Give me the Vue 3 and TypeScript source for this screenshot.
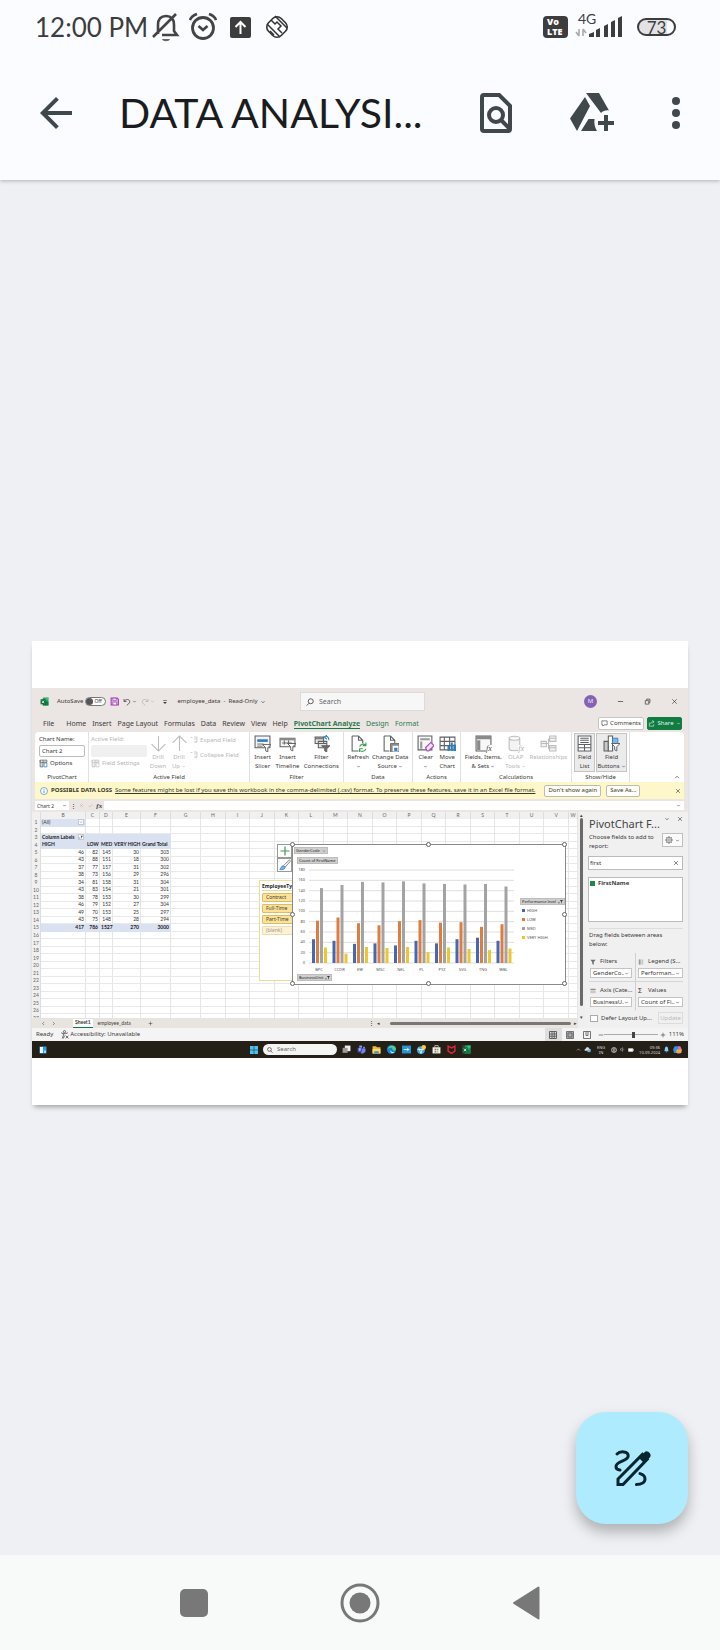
<script setup lang="ts">
import { h, ref } from 'vue'

type Stroke = [d: string, stroke?: string, fill?: string, width?: number]

const G = '#5f6062'
const L = '#bdbdbd'
const B = '#2f7fc4'

// Small outline drawings on a 16 x 16 grid
const glyphs: Record<string, Stroke[]> = {
  chevron: [['M4 6l4 4 4-4', 'currentColor', 'none', 1.8]],
  up: [['M3 11l5-5 5 5', 'currentColor', 'none', 1.8]],
  left: [['M10 3L5 8l5 5', 'currentColor', 'none', 1.6]],
  right: [['M6 3l5 5-5 5', 'currentColor', 'none', 1.6]],
  close: [['M3 3l10 10M13 3L3 13', 'currentColor', 'none', 1.6]],
  check: [['M2 9l4 4 8-9', 'currentColor', 'none', 1.8]],
  plus: [['M8 2v12M2 8h12', 'currentColor', 'none', 1.6]],
  minus: [['M2 8h12', 'currentColor', 'none', 1.6]],
  restore: [['M3 6h8v8H3zM6 5V2.500h7.500v8H11', 'currentColor', 'none', 1.6]],
  lens: [['M9.500 1.500a5 5 0 1 1 0 10a5 5 0 1 1 0-10M6 10.500L1.500 15', 'currentColor', 'none', 1.6]],
  lensright: [['M6.500 1.500a5 5 0 1 1 0 10a5 5 0 1 1 0-10M10 10.500L14.500 15', 'currentColor', 'none', 2]],
  excel: [['M5 1h10v14H5z', '', '#21a366'], ['M10 8h5v7H5v-3z', '', '#107c41'], ['M10 1h5v4h-5z', '', '#33c481'], ['M1 4h9v9H1z', '', '#0b6b38'], ['M3.500 6.500l4 4.500M7.500 6.500l-4 4.500', '#fff', 'none', 1.4]],
  save: [['M2 2h11l2 2v10H2z', '#a24ab5', '#dcb2e6', 2], ['M5 2h6v4H5zM5 9h7v5H5z', '#a24ab5', '#fff', 1.4]],
  undo: [['M2 2v5h5M2.500 6.500c3-5 11-4.500 11 1 0 3-3 4.500-6 7', 'currentColor', 'none', 1.5]],
  redo: [['M14 2v5H9M13.500 6.500c-3-5-11-4.500-11 1 0 3 3 4.500 6 7', 'currentColor', 'none', 1.5]],
  custom: [['M3 4h10', 'currentColor', 'none', 1.6], ['M3 8h10l-5 5z', '', 'currentColor']],
  bubble: [['M2 2h12v9H7l-3 3v-3H2z', 'currentColor', 'none', 1.4]],
  share: [['M3 6v8h10v-4M6 9c0-4 3-5 7-5M10 1l4 3-4 3', 'currentColor', 'none', 1.4]],
  options: [['M2 2h12v4H2zM2 2v12h5V2', G, '#d8d8d8', 1.3], ['M9 7h5v7H9z', B, '#fff', 1.3]],
  optionsoff: [['M2 2h12v4H2zM2 2v12h5V2', L, '#efefef', 1.3], ['M9 7h5v7H9z', L, '#fff', 1.3]],
  down: [['M8 1v14M1.500 8.500L8 15l6.500-6.500', L, 'none', 1]],
  rise: [['M8 15V1M1.500 7.500L8 1l6.500 6.500', L, 'none', 1]],
  expand: [['M1 3h4M8 2h6v4H8M8 12h6V6M10 12h4', L, 'none', 1.4]],
  slicer: [['M1 1h14v11H1z', G, '#f4f4f4', 1], ['M3 4h10v2.500H3z', '', B], ['M3 8.500h6M3 10.500h5', G, 'none', 0.8], ['M8 9h8l-3 3v4l-2-1v-3z', G, '#fff', 0.9]],
  timeline: [['M1 3h14v8H1z', G, '#f4f4f4', 1], ['M1 3h14v2H1z', '', '#8a8a8a'], ['M3 7.500h9M5 5v4M9 5v4', G, 'none', 0.9], ['M8 8h8l-3 3v4l-2-1v-3z', G, '#fff', 0.9]],
  connect: [['M2 2h8v6H2zM5 6h8v6H5z', G, '#e4e4e4', 1], ['M2 3.500h8M5 8h8', G, 'none', 1], ['M10 2c3-2 5 0 5 3M13 0l-2 2 2 2', B, 'none', 1], ['M8 10h8l-3 3v3l-2-1v-2z', G, '#6b6b6b', 0.8]],
  refresh: [['M2 1h6l4 4v3M2 1v14h6M8 1v4h4', G, 'none', 1], ['M9 11c1-3 5-3 6-1M15 7v3h-3M15 13c-1 3-5 3-6 1M9 16v-3h3', '#3a9d53', 'none', 1]],
  source: [['M2 1h6l4 4v3M2 1v14h5M8 1v4h4', G, 'none', 1], ['M8 8h8v8H8z', G, '#fff', 0.9], ['M8 8h8v2H8zM8 8h2v8H8z', '', '#8a8a8a'], ['M11.500 12h3v3h-3z', '', B]],
  clear: [['M1 1h13v13H1z', G, '#f8f8f8', 1], ['M3 3h9v2H3zM3 6h2v7H3z', '', '#9a9a9a'], ['M8 12l5-5 3 3-5 5H9.500z', '#a24ab5', '#f2dcf7', 1]],
  move: [['M1 2h14v12H1zM1 6h14M1 10h14M5 2v12M10 2v12', G, 'none', 1], ['M8 10h2v5H8zM11 7h2v8h-2zM13.500 9h2.500v6h-2.500z', '', B]],
  fields: [['M1 1h14v14H1z', G, '#f8f8f8', 1], ['M1 1h14v3H1zM2 5h3v9H2z', '', '#8a8a8a']],
  olap: [['M2 3c0-2.500 10-2.500 10 0v10c0 2.500-10 2.500-10 0zM2 3c0 2.500 10 2.500 10 0', L, '#f3f3f3', 1]],
  relation: [['M1 6h5v5H1zM9 1h6v5H9zM9 10h6v5H9z', L, '#f3f3f3', 1], ['M6 8h2V4h1M8 8v5h1M9 3h6M9 12h6M1 8h5', L, 'none', 1]],
  list: [['M2 1h12v14H2z', G, '#fff', 1], ['M4 3h8M4 5h8M4 7h8M2 9h12M8 9v6M2 12h12', G, 'none', 1]],
  buttons: [['M1 6h4v9H1z', G, '#c9c9c9', 1], ['M5 1h4v14H5z', G, '#fff', 1], ['M9 3h5v5H9z', B, '#7db7e8', 0.8], ['M8 8h8l-3 3v4l-2-1v-3z', G, '#fff', 0.9]],
  info: [['M8 1a7 7 0 1 1 0 14a7 7 0 1 1 0-14', B, '#fff', 1.3], ['M8 7v5M8 4v1.500', B, 'none', 1.6]],
  gear: [['M8 5.500a2.500 2.500 0 1 1 0 5a2.500 2.500 0 1 1 0-5', G, 'none', 1.3], ['M8 2.500a5.500 5.500 0 1 1 0 11a5.500 5.500 0 1 1 0-11', G, 'none', 1.3], ['M8 0v3M8 13v3M0 8h3M13 8h3M2.500 2.500l2 2M11.500 11.500l2 2M13.500 2.500l-2 2M4.500 11.500l-2 2', G, 'none', 1.5]],
  funnel: [['M1 2h14l-5 6v7l-4-2V8z', '', '#6c6c6c']],
  sortfunnel: [['M1 12h4M3 9v5', '#333', 'none', 1.4], ['M6 3h10l-4 5v6l-2-1V8z', '', '#333']],
  bars: [['M2 1h5v14H2z', '', '#9a9a9a'], ['M9 1h5v14H9z', '', '#c8c8c8']],
  rows: [['M1 2h14v4H1z', '', '#8e8e8e'], ['M1 8h14v6H1z', '', '#c8c8c8']],
  brush: [['M14 1L6 9l2 2 7-8z', G, '#fff', 1], ['M6 9c-3 0-3 3-5 5 3 1 7 0 7-3z', B, '#6fb1e6', 1]],
  access: [['M8 1a2 2 0 1 1 0 4a2 2 0 1 1 0-4M2 5l4 1.500v3L4 15M14 5l-4 1.500M6 6.500h4M8 10l-2 5', 'currentColor', 'none', 1.3], ['M10 10l5 5M15 10l-5 5', 'currentColor', 'none', 1.3]],
  grid: [['M1 1h14v14H1zM1 6h14M1 10.500h14M6 1v14M10.500 1v14', 'currentColor', 'none', 1.8]],
  layout: [['M1 1h14v14H1zM4 4h8v8H4z', 'currentColor', '#aaa', 1.5]],
  breaks: [['M1 15V1h14v14zM6 1v8M10 1v8M6 9h4', 'currentColor', 'none', 1.6]],
  widgets: [['M1 1h14v14H1z', '', '#2f9be0'], ['M2 2h6v12H2z', '', '#eef7ff'], ['M10 9h4v5h-4z', '', '#9ad8ff']],
  windows: [['M0 0h7.500v7.500H0zM8.500 0H16v7.500H8.500zM0 8.500h7.500V16H0zM8.500 8.500H16V16H8.500z', '', '#4cc2f1']],
  taskview: [['M5 1h10v10H5z', '', '#f1f1f1'], ['M1 5h9v9H1z', '', '#9b9b9b']],
  teams: [['M4 1h5v4H4zM11 3h3v3h-3z', '', '#8b8ff0'], ['M6 6h9v6l-4 3H7z', '', '#7b83eb'], ['M1 5h8v8H1z', '', '#4b53bc'], ['M3 7h4M5 7v4', '#fff', 'none', 1.2]],
  folder: [['M1 2h6l2 2h6v11H1z', '', '#f0b92e'], ['M1 7h14v8H1z', '', '#ffd766'], ['M4 11h8v4H4z', '', '#3f8fd8']],
  edge: [['M8 0a8 8 0 1 1 0 16a8 8 0 1 1 0-16', '', '#1a84d0'], ['M1 8C2-1 15-1 16 7c0 4-6 3-6 1 0-5-8-3-9 0z', '', '#4ed08a'], ['M6 9c1 4 5 4 8 3-4 4-9 2-8-3z', '', '#e8f6ff']],
  arrowapp: [['M0 1h16v14H0z', '', '#2596d1'], ['M3 8h9M9 5l3 3-3 3', '#fff', 'none', 1.4]],
  globeapp: [['M7 2a7 7 0 1 1 0 14a7 7 0 1 1 0-14', '', '#3da7e0'], ['M3 5l4 10M10 5L7 15M1 8h12', '#fff', 'none', 1.3], ['M12 0a4 4 0 1 1 0 8a4 4 0 1 1 0-8', '', '#ffc83d']],
  store: [['M1 4h14v11H1z', '', '#f3f3f3'], ['M5 4V1h6v3', '#d0d0d0', 'none', 1.4], ['M4.500 6.500h3v3h-3z', '', '#e35a3a'], ['M8.500 6.500h3v3h-3z', '', '#6fb53c'], ['M4.500 10.500h3v3h-3z', '', '#3d9be0'], ['M8.500 10.500h3v3h-3z', '', '#f1b52e']],
  shield: [['M2 2l6 3 6-3v9l-6 4-6-4z', '#d8283a', 'none', 2.6]],
  cloud: [['M3 11c-3-1-2-5 1-5 1-4 7-4 8 0 4 0 4 5 1 5z', '', '#d9dde0'], ['M8 8h7v6H8z', '', '#6bb4e2']],
  net: [['M8 1a7 7 0 1 1 0 14a7 7 0 1 1 0-14M1 8h14M8 1v14M3 3.500c3 2 7 2 10 0M3 12.500c3-2 7-2 10 0', '#ddd', 'none', 1.4]],
  sound: [['M1 6h3l4-4v12l-4-4H1zM11 6c2 1 2 3 0 4', '#ddd', 'none', 1.4]],
  battery: [['M1 4h12v8H1z', '#ddd', '#fff', 1.2], ['M14 6h2v4h-2z', '', '#ddd']],
  bell: [['M3 12c2-3 0-10 5-11 5 1 3 8 5 11zM6 13h4l-2 2z', '', '#7fd0f5']],
  copilot: [['M3 2h7l2 5-3 7H2L0 8z', '', '#3a8ee6'], ['M9 2h4l3 7-3 6H7l3-7z', '', '#e86fb0'], ['M6 8h9v6H6z', '', '#f3b13c']],
}

const Glyph = (p: { name: string }) =>
  h('svg', { viewBox: '0 0 16 16', 'aria-hidden': 'true' },
    glyphs[p.name].map(([d, stroke, fill, width]) =>
      h('path', { d, stroke: stroke || 'none', fill: fill ?? 'none', 'stroke-width': width ?? 1 })))
Glyph.props = ['name']

const menu = ['File', 'Home', 'Insert', 'Page Layout', 'Formulas', 'Data', 'Review', 'View', 'Help', 'PivotChart Analyze', 'Design', 'Format']

interface Tool { icon: string; lines: string[]; drop?: boolean; off?: boolean; on?: boolean; fx?: boolean }
const toolGroups: { name: string; cls: string; tools: Tool[] }[] = [
  { name: 'Filter', cls: 'g-filter', tools: [{ icon: 'slicer', lines: ['Insert', 'Slicer'] }, { icon: 'timeline', lines: ['Insert', 'Timeline'] }, { icon: 'connect', lines: ['Filter', 'Connections'] }] },
  { name: 'Data', cls: 'g-data', tools: [{ icon: 'refresh', lines: ['Refresh', ''], drop: true }, { icon: 'source', lines: ['Change Data', 'Source'], drop: true }] },
  { name: 'Actions', cls: 'g-actions', tools: [{ icon: 'clear', lines: ['Clear', ''], drop: true }, { icon: 'move', lines: ['Move', 'Chart'] }] },
  { name: 'Calculations', cls: 'g-calc', tools: [{ icon: 'fields', lines: ['Fields, Items,', '& Sets'], drop: true, fx: true }, { icon: 'olap', lines: ['OLAP', 'Tools'], drop: true, off: true, fx: true }, { icon: 'relation', lines: ['Relationships', ''], off: true }] },
  { name: 'Show/Hide', cls: 'g-show', tools: [{ icon: 'list', lines: ['Field', 'List'], on: true }, { icon: 'buttons', lines: ['Field', 'Buttons'], drop: true, on: true }] },
]

const columns = ['B', 'C', 'D', 'E', 'F', 'G', 'H', 'I', 'J', 'K', 'L', 'M', 'N', 'O', 'P', 'Q', 'R', 'S', 'T', 'U', 'V', 'W']

const units = [
  { unit: 'BPC', v: [46, 82, 145, 30], total: 303 },
  { unit: 'CCDR', v: [43, 88, 151, 18], total: 300 },
  { unit: 'EW', v: [37, 77, 157, 31], total: 302 },
  { unit: 'MSC', v: [38, 73, 156, 29], total: 296 },
  { unit: 'NEL', v: [34, 81, 158, 31], total: 304 },
  { unit: 'PL', v: [43, 83, 154, 21], total: 301 },
  { unit: 'PYZ', v: [38, 78, 153, 30], total: 299 },
  { unit: 'SVG', v: [46, 79, 152, 27], total: 304 },
  { unit: 'TNG', v: [49, 70, 153, 25], total: 297 },
  { unit: 'WBL', v: [43, 75, 148, 28], total: 294 },
]
const cells: Record<number, (string | number)[]> = {
  1: ['(All)'],
  3: ['Column Labels'],
  4: ['HIGH', 'LOW', 'MED', 'VERY HIGH', 'Grand Total'],
  15: [417, 786, 1527, 270, 3000],
}
units.forEach((u, i) => { cells[5 + i] = [...u.v, u.total] })

const series = [
  { name: 'HIGH', color: '#4668b0' },
  { name: 'LOW', color: '#dd7e40' },
  { name: 'MED', color: '#a3a3a3' },
  { name: 'VERY HIGH', color: '#eec630' },
]
const ticks = Array.from({ length: 10 }, (_, i) => i * 20)
const base = 97
const yOf = (v: number) => base - (v * 93) / 180
const xOf = (i: number) => 25 + i * 20.5

const slicer = ['Contract', 'Full-Time', 'Part-Time', '(blank)']
const areas = [
  { icon: 'funnel', title: 'Filters', value: 'GenderCo...' },
  { icon: 'bars', title: 'Legend (S...', value: 'Performan...' },
  { icon: 'rows', title: 'Axis (Cate...', value: 'BusinessU...' },
  { icon: '', title: 'Values', value: 'Count of Fi...' },
]
const taskApps = ['taskview', 'teams', 'folder', 'edge', 'arrowapp', 'globeapp', 'store', 'shield', 'excel']

const chartName = ref('Chart 2')
const query = ref('first')
const zoomLevel = ref(55)
const picked = ref(true)
const defer = ref(false)
</script>

<template>
  <div class="screen">
    <header class="top">
      <div class="status">
        <time>12:00 PM</time>
        <svg class="st" viewBox="0 0 28 30" aria-hidden="true">
          <path d="M6 22V13c0-6 3-9 8-9s8 3 8 9v6l3 4H10M1 25L24 2" fill="none" stroke="#444" stroke-width="2.600" />
          <path d="M10 27h8c-1 3-7 3-8 0z" fill="#666" />
        </svg>
        <svg class="st" viewBox="0 0 28 30" aria-hidden="true">
          <circle cx="14" cy="16" r="10.500" fill="none" stroke="#444" stroke-width="2.800" />
          <path d="M1 8c1-3 4-5 7-6M27 8c-1-3-4-5-7-6M9.500 14l4.500 4 4.500-4" fill="none" stroke="#444" stroke-width="2.600" />
        </svg>
        <svg class="st" viewBox="0 0 28 30" aria-hidden="true">
          <rect x="4" y="5" width="21" height="21" rx="2" fill="#3d3d3d" />
          <path d="M14.500 22V10M9.500 15l5-5 5 5" fill="none" stroke="#fff" stroke-width="2" />
        </svg>
        <svg class="st" viewBox="0 0 28 30" aria-hidden="true">
          <rect x="5" y="6" width="18" height="18" rx="6" transform="rotate(45 14 15)" fill="none" stroke="#333" stroke-width="1.600" />
          <path d="M4 12l13 13M8 8l4 4 2-2 4 4-3 3 4 4M12 4l12 12M7 19l4 4" fill="none" stroke="#333" stroke-width="1.500" />
        </svg>
        <span class="spacer"></span>
        <span class="volte"><b>Vo</b><b>LTE</b></span>
        <span class="net">
          <small>4G</small>
          <svg viewBox="0 0 48 24" aria-hidden="true">
            <path d="M4 21v-7M1 17l3 4M8 14v7M11 18l-3-4" fill="none" stroke="#aaa" stroke-width="1.600" />
            <path d="M14 22v-3l5-2v5zM21 22v-7l4-2v9zM29 22V11l4-2v13zM36 22V7l4-2v17zM43 22V3l4-2v21z" fill="#3d3d3d" />
          </svg>
        </span>
        <span class="batt">73</span>
      </div>
      <div class="appbar">
        <button class="tap" aria-label="Back">
          <svg viewBox="0 0 24 24"><path d="M20 11H7.830l5.590-5.590L12 4l-8 8 8 8 1.410-1.410L7.830 13H20z" fill="#40484b" /></svg>
        </button>
        <h1>DATA ANALYSI...</h1>
        <button class="tap" aria-label="Find in file">
          <svg viewBox="0 0 24 24" fill="none" stroke="#40484b" stroke-width="2">
            <path d="M6 3h7.600L19 8.400V20a1 1 0 0 1-1 1H6a1 1 0 0 1-1-1V4a1 1 0 0 1 1-1z" />
            <circle cx="12" cy="13" r="3.500" /><path d="M14.500 15.500l4 4" />
          </svg>
        </button>
        <button class="tap" aria-label="Add to Drive">
          <svg viewBox="0 0 48 48" fill="#40484b">
            <path d="M17 8l5 9L9 42 2 29.500zM18 4h13l10 17.500c-3-.5-6 .5-8 2.500L18 4zM20.500 30h6c-.5 4.500 0 8 2.500 12H13zM36 26h4v6h6v4h-6v6h-4v-6h-6v-4h6z" />
          </svg>
        </button>
        <button class="tap narrow" aria-label="More options">
          <svg viewBox="0 0 12 24" fill="#40484b"><circle cx="6" cy="6" r="2" /><circle cx="6" cy="12" r="2" /><circle cx="6" cy="18" r="2" /></svg>
        </button>
      </div>
    </header>

    <main>
      <article class="page">
        <div class="win">
          <div class="titlebar">
            <div class="tb-left">
              <Glyph name="excel" class="i9" />
              <span class="as">AutoSave</span>
              <button class="toggle" role="switch" aria-checked="false"><i></i>Off</button>
              <Glyph name="save" class="i9" />
              <Glyph name="undo" class="i8" /><Glyph name="chevron" class="i5" />
              <Glyph name="redo" class="i8 dim" /><Glyph name="chevron" class="i5 dim" />
              <Glyph name="custom" class="i6" />
              <span class="doc">employee_data &nbsp;-&nbsp; Read-Only</span><Glyph name="chevron" class="i6" />
            </div>
            <label class="find"><Glyph name="lens" class="i8" /><input type="search" placeholder="Search" aria-label="Search commands" /></label>
            <div class="tb-right">
              <span class="avatar">M</span>
              <button aria-label="Minimize"><Glyph name="minus" class="i7" /></button>
              <button aria-label="Restore"><Glyph name="restore" class="i7" /></button>
              <button aria-label="Close"><Glyph name="close" class="i7" /></button>
            </div>
          </div>

          <nav class="tabs" aria-label="Ribbon tabs">
            <button v-for="(m, i) in menu" :key="m" :class="{ green: i > 8, active: i === 9 }">{{ m }}</button>
            <span class="spacer"></span>
            <button class="comments"><Glyph name="bubble" class="i7" />Comments</button>
            <button class="share"><Glyph name="share" class="i7" />Share<Glyph name="chevron" class="i5" /></button>
          </nav>

          <div class="ribbon">
            <section class="group g-pivot">
              <div class="body stack">
                <label for="cname">Chart Name:</label>
                <input id="cname" v-model="chartName" />
                <button class="small"><Glyph name="options" class="i9" />Options</button>
              </div>
              <footer>PivotChart</footer>
            </section>
            <section class="group g-field">
              <div class="body">
                <div class="stack off wide">
                  <label for="afield">Active Field:</label>
                  <input id="afield" disabled />
                  <button class="small" disabled><Glyph name="optionsoff" class="i9" />Field Settings</button>
                </div>
                <button class="tool off" disabled><Glyph name="down" class="big" /><span>Drill</span><span>Down</span></button>
                <button class="tool off" disabled><Glyph name="rise" class="big" /><span>Drill</span><span>Up<Glyph name="chevron" class="i5" /></span></button>
                <div class="pair off">
                  <button class="small" disabled><Glyph name="expand" class="i8" />Expand Field</button>
                  <button class="small" disabled><Glyph name="expand" class="i8" />Collapse Field</button>
                </div>
              </div>
              <footer>Active Field</footer>
            </section>
            <section v-for="g in toolGroups" :key="g.name" class="group" :class="g.cls">
              <div class="body">
                <button v-for="t in g.tools" :key="t.icon" class="tool" :class="{ off: t.off, on: t.on }" :disabled="t.off">
                  <span class="pic"><Glyph :name="t.icon" class="big" /><em v-if="t.fx">fx</em></span>
                  <span>{{ t.lines[0] }}</span>
                  <span>{{ t.lines[1] }}<Glyph v-if="t.drop" name="chevron" class="i5" /></span>
                </button>
              </div>
              <footer>{{ g.name }}</footer>
            </section>
            <button class="fold" aria-label="Collapse ribbon"><Glyph name="up" class="i6" /></button>
          </div>

          <div class="notice">
            <Glyph name="info" class="i8" />
            <strong>POSSIBLE DATA LOSS</strong>
            <a href="#">Some features might be lost if you save this workbook in the comma-delimited (.csv) format. To preserve these features, save it in an Excel file format.</a>
            <button class="boxed">Don't show again</button>
            <button class="boxed">Save As...</button>
            <span class="spacer"></span>
            <button aria-label="Dismiss"><Glyph name="close" class="i6" /></button>
          </div>

          <div class="formula">
            <label class="namebox"><select aria-label="Name box"><option>Chart 2</option></select><Glyph name="chevron" class="i5" /></label>
            <span class="fxtools"><b>⋮</b><Glyph name="close" class="i5 dim" /><Glyph name="check" class="i5 dim" /><em>fx</em></span>
            <label class="fxline"><input aria-label="Formula" /><Glyph name="chevron" class="i5" /></label>
          </div>

          <div class="work">
            <div class="sheetcol">
              <div class="sheet">
                <table>
                  <colgroup>
                    <col class="w9" /><col class="w45" /><col class="w14" /><col class="w13" /><col class="w28" /><col class="w30" /><col class="w30" /><col class="w25" /><col class="w24" />
                    <col v-for="n in 13" :key="n" /><col class="w9" />
                  </colgroup>
                  <thead><tr><th></th><th v-for="c in columns" :key="c">{{ c }}</th></tr></thead>
                  <tbody>
                    <tr v-for="r in 27" :key="r" :class="{ bold: r === 3 || r === 4 || r === 15 }">
                      <th>{{ r }}</th>
                      <td v-for="(c, i) in columns" :key="c" :class="{ num: r > 4, blue: i < 5 && (r === 3 || r === 4 || r === 15) || (i === 0 && r === 1) }">
                        {{ cells[r]?.[i] ?? '' }}<button v-if="i === 0 && (r === 1 || r === 3)" class="drop" aria-label="Filter"><Glyph :name="r === 1 ? 'chevron' : 'sortfunnel'" /></button>
                      </td>
                    </tr>
                  </tbody>
                </table>

                <aside class="slicer">
                  <h2>EmployeeType</h2>
                  <button v-for="(s, i) in slicer" :key="s" :class="{ faint: i === 3 }">{{ s }}</button>
                </aside>
                <div class="charttools">
                  <button aria-label="Chart elements" class="add"><Glyph name="plus" class="i12" /></button>
                  <button aria-label="Chart styles"><Glyph name="brush" class="i12" /></button>
                </div>
                <figure class="chart">
                  <button class="pv">GenderCode <Glyph name="chevron" class="i4" /></button>
                  <button class="pv second">Count of FirstName</button>
                  <div class="plotrow">
                    <svg class="plot" viewBox="0 0 226 108" role="img" aria-label="Employees by business unit">
                      <g v-for="t in ticks" :key="t">
                        <path :d="`M15 ${yOf(t)}H220`" stroke="#dedede" stroke-width="1" />
                        <text x="11" :y="yOf(t) + 1" text-anchor="end">{{ t }}</text>
                      </g>
                      <g v-for="(u, i) in units" :key="u.unit">
                        <rect v-for="(v, k) in u.v" :key="k" :x="xOf(i) - 7 + k * 4" :y="yOf(v)" width="3" :height="base - yOf(v)" :fill="series[k].color" />
                        <text :x="xOf(i)" y="105" text-anchor="middle">{{ u.unit }}</text>
                      </g>
                    </svg>
                    <div class="legend">
                      <button class="pv">Performance level <Glyph name="sortfunnel" class="i5" /></button>
                      <ul><li v-for="s in series" :key="s.name"><i :style="{ background: s.color }"></i>{{ s.name }}</li></ul>
                    </div>
                  </div>
                  <button class="pv unit">BusinessUnit <Glyph name="sortfunnel" class="i5" /></button>
                  <i v-for="n in 8" :key="n" class="knob" :class="'k' + n"></i>
                </figure>
              </div>
              <div class="sheettabs">
                <button aria-label="Previous sheet"><Glyph name="left" class="i5" /></button>
                <button aria-label="Next sheet"><Glyph name="right" class="i5" /></button>
                <button class="cur">Sheet1</button>
                <button class="other">employee_data</button>
                <button aria-label="New sheet"><Glyph name="plus" class="i5" /></button>
                <div class="hbar"><b>⋮</b><span>◂</span><i></i><span>▸</span></div>
              </div>
            </div>
            <div class="vbar"><span>▴</span><i></i><span>▾</span></div>

            <aside class="pane">
              <div class="ptitle"><h2>PivotChart F...</h2><button aria-label="Pane options"><Glyph name="chevron" class="i6" /></button><button aria-label="Close pane"><Glyph name="close" class="i6" /></button></div>
              <div class="choose"><p>Choose fields to add to report:</p><button aria-label="Tools"><Glyph name="gear" class="i8" /><Glyph name="chevron" class="i5" /></button></div>
              <label class="pfind"><input v-model="query" aria-label="Search fields" /><Glyph name="close" class="i6" /></label>
              <div class="plist"><label><input v-model="picked" type="checkbox" />FirstName</label></div>
              <hr />
              <p class="drag">Drag fields between areas below:</p>
              <div class="areas">
                <label v-for="a in areas" :key="a.title">
                  <span class="ahead"><Glyph v-if="a.icon" :name="a.icon" class="i6" /><b v-else>Σ</b>{{ a.title }}</span>
                  <span class="asel"><select><option>{{ a.value }}</option></select><Glyph name="chevron" class="i5" /></span>
                </label>
              </div>
              <div class="defer"><label><input v-model="defer" type="checkbox" />Defer Layout Up...</label><button disabled>Update</button></div>
            </aside>
          </div>

          <div class="statusbar">
            <span>Ready</span><Glyph name="access" class="i9" /><span>Accessibility: Unavailable</span>
            <span class="spacer"></span>
            <button class="view cur" aria-label="Normal view"><Glyph name="grid" class="i8" /></button>
            <button class="view" aria-label="Page layout view"><Glyph name="layout" class="i8" /></button>
            <button class="view" aria-label="Page break view"><Glyph name="breaks" class="i8" /></button>
            <Glyph name="minus" class="i6" />
            <input v-model="zoomLevel" type="range" aria-label="Zoom" />
            <Glyph name="plus" class="i6" />
            <span class="pct">111%</span>
          </div>

          <div class="taskbar">
            <Glyph name="widgets" class="i8" />
            <div class="apps">
              <Glyph name="windows" class="i8" />
              <label><Glyph name="lensright" class="i6" /><input type="search" placeholder="Search" aria-label="Search taskbar" /></label>
              <button v-for="t in taskApps" :key="t" :aria-label="t" :class="t"><Glyph :name="t" class="i9" /></button>
            </div>
            <div class="tray">
              <Glyph name="up" class="i5" /><Glyph name="cloud" class="i7" />
              <span>ENG<br />IN</span>
              <Glyph name="net" class="i6" /><Glyph name="sound" class="i5" /><Glyph name="battery" class="i6" />
              <time>09:36<br />10-09-2024</time>
              <Glyph name="bell" class="i7" /><Glyph name="copilot" class="i9" />
            </div>
          </div>
        </div>
      </article>

      <button class="fab" aria-label="Annotate">
        <svg viewBox="0 0 24 24" fill="none" stroke="#06252c" stroke-width="1.500" stroke-linecap="round">
          <path d="M4.500 5c1.500-1.600 5.700-1.500 5.600 1 0 2.700-6.200 2.400-6.100 5.200 0 1 .9 1.700 2 1.800M16 14.800c1.500.4 2.500 1.300 2.500 2.700 0 1.700-1.800 2.700-4.300 2.700" />
          <path d="M5 20.300v-2.800L17.200 5.200l2.400 2.400L7.500 20.300z" stroke-linecap="butt" />
          <path d="M15.500 7l2.900-3c1.200-1.200 3.800 1.200 2.600 2.600L18.200 9.700z" fill="#06252c" stroke="none" />
        </svg>
      </button>
    </main>

    <nav class="sysnav" aria-label="System">
      <button aria-label="Recent apps"><svg viewBox="0 0 40 40"><rect x="6" y="6" width="28" height="28" rx="5" fill="#787878" /></svg></button>
      <button aria-label="Home"><svg viewBox="0 0 40 40"><circle cx="20" cy="20" r="18" fill="none" stroke="#787878" stroke-width="3" /><circle cx="20" cy="20" r="10.500" fill="#787878" /></svg></button>
      <button aria-label="Back"><svg viewBox="0 0 40 40"><path d="M8 20L32.500 4.500v31z" fill="#787878" stroke="#787878" stroke-width="2" stroke-linejoin="round" /></svg></button>
    </nav>
  </div>
</template>

<style>
body { margin: 0; background: #eff0f3; }
</style>

<style scoped>
* { box-sizing: border-box; }
button, input, select { font: inherit; color: inherit; background: none; border: 0; padding: 0; margin: 0; min-width: 0; border-radius: 0; appearance: none; outline: none; }
button { white-space: nowrap; cursor: pointer; display: flex; align-items: center; justify-content: center; }
h1, h2, p, ul, figure { margin: 0; padding: 0; }
svg { display: block; flex: none; }
.spacer { flex: 1; }
.screen { min-height: 100vh; display: flex; flex-direction: column; background: #eff0f3; font-family: "Noto Sans", "Open Sans", sans-serif; }

.top { background: #fbfcff; box-shadow: 0 1px 4px #0004; position: relative; }
.status { height: 54px; display: flex; align-items: center; padding: 0 44px 0 35px; color: #3d3d3d; }
.status time { font: 26px/30px "Lato", sans-serif; margin-right: 4px; }
.st { width: 28px; height: 30px; margin-right: 9px; }
.volte { width: 25px; height: 22px; border-radius: 4px; background: #3d3d3d; color: #fff; display: grid; padding: 1px 4px; font: 9px/10px "Open Sans", sans-serif; }
.volte b { font-weight: 800; }
.net { position: relative; width: 48px; margin: 0 14px 0 7px; }
.net svg { width: 48px; height: 24px; }
.net small { position: absolute; left: 3px; top: -4px; font: 14px/16px "Lato", sans-serif; }
.batt { width: 39px; height: 18px; border: 2px solid #3d3d3d; border-radius: 9px; background: linear-gradient(90deg, #e2e2e5 80%, #fbfcff 80%); font: 17px/16px "Lato", sans-serif; text-align: center; }
.appbar { height: 126px; display: flex; align-items: center; padding: 0 32px 8px; gap: 48px; }
.appbar h1 { flex: 1; min-width: 0; font: 400 41px/48px "Lato", sans-serif; color: #1a1c1e; white-space: nowrap; margin: 0 -9px; }
.tap, .tap svg { width: 48px; height: 48px; }
.tap.narrow, .tap.narrow svg { width: 24px; }

main { flex: 1; position: relative; display: flex; flex-direction: column; justify-content: center; padding: 11px 32px 0; }
.page { background: #fff; padding: 47px 0; box-shadow: 0 4px 5px -2px #0005; }
.fab { position: absolute; right: 32px; bottom: 31px; width: 112px; height: 112px; border-radius: 30px; background: #aeebff; box-shadow: 0 8px 14px #0004; }
.fab svg { width: 48px; height: 48px; }
.sysnav { height: 95px; background: #f8faf9; display: grid; grid-template-columns: repeat(3, 23%); justify-content: center; }
.sysnav svg { width: 40px; height: 40px; }

.win { font-size: 6px; line-height: 9px; color: #3c3a3a; background: #ebe5e3; overflow: hidden; }
.i4 { width: 4px; height: 4px; } .i5 { width: 5px; height: 5px; } .i6 { width: 6px; height: 6px; } .i7 { width: 7px; height: 7px; }
.i8 { width: 8px; height: 8px; } .i9 { width: 9px; height: 9px; } .i12 { width: 12px; height: 12px; }
.dim { color: #b5b0ae; }
.titlebar { height: 27px; display: flex; align-items: center; }
.tb-left { width: 268px; display: flex; align-items: center; padding-left: 8px; white-space: nowrap; }
.as { margin: 0 2px 0 8px; }
.toggle { width: 21px; height: 9px; border: 1px solid #777; border-radius: 5px; background: #fff; margin-right: 4px; justify-content: flex-start; gap: 1px; line-height: 7px; font-size: 5px; }
.toggle i { width: 7px; height: 7px; border-radius: 4px; background: #555; }
.tb-left .i8 { margin-left: 4px; } .tb-left .i5 { margin-left: 1px; } .tb-left > .i6 { margin-left: 7px; }
.tb-left .doc { margin-left: 9px; } .tb-left .doc + .i6 { margin-left: 2px; }
.find { width: 125px; height: 19px; background: #f7f7f8; border: 1px solid #dedada; display: flex; align-items: center; gap: 5px; padding-left: 5px; font-size: 7px; }
.find input { flex: 1; } .find input::placeholder, .apps input::placeholder { color: #666; opacity: 1; }
.tb-right { flex: 1; display: flex; align-items: center; justify-content: flex-end; padding-right: 10px; gap: 20px; }
.avatar { width: 13px; height: 13px; border-radius: 50%; background: #8661b5; color: #eee; text-align: center; line-height: 13px; }
.tabs { height: 17px; display: flex; align-items: center; padding: 0 6px 0 11px; gap: 6px; font-size: 7px; white-space: nowrap; }
.tabs button { height: 11px; }
.tabs button:first-child { margin-right: 6px; }
.green { color: #2f7a4f; }
.tabs .active { font-weight: 700; border-bottom: 1px solid #107c41; }
.tabs .comments, .tabs .share { height: 13px; border: 1px solid #c8c4c2; border-radius: 2px; background: #fff; width: 46px; gap: 2px; font-size: 6px; }
.tabs .share { width: 35px; margin-left: -3px; background: #107c41; color: #e6f5ec; border-color: #107c41; }

.ribbon { height: 50px; margin: 0 4px 0 3px; background: #fff; border-radius: 4px 4px 0 0; display: flex; position: relative; }
.group { border-right: 1px solid #e0e0e0; padding: 2px 2px 0; display: flex; flex-direction: column; }
.group footer { text-align: center; line-height: 9px; }
.body { flex: 1; display: flex; justify-content: space-around; }
.g-pivot { width: 54px; padding: 2px 3px 0 4px; } .g-field { width: 161px; } .g-filter { width: 94px; } .g-data { width: 69px; }
.g-actions { width: 48px; } .g-calc { width: 111px; } .g-show { width: 58px; }
.g-field .body { justify-content: flex-start; gap: 1px; }
.g-field .tool { width: 20px; }
.stack { display: flex; flex-direction: column; }
.body.stack { justify-content: flex-start; }
.stack label { height: 11px; line-height: 10px; }
.stack input { height: 12px; border: 1px solid #bbb; border-radius: 2px; padding-left: 2px; width: 100%; }
.stack.wide { width: 56px; } .stack.off input { background: #f0f0f0; border-color: #f0f0f0; }
.small { justify-content: flex-start; gap: 2px; height: 12px; }
.off { color: #b5b5b5; }
.pair { display: flex; flex-direction: column; gap: 3px; }
.tool { flex-direction: column; justify-content: flex-start; line-height: 9px; padding: 0 1px; height: 38px; }
.tool > span { display: flex; align-items: center; justify-content: center; height: 9px; gap: 1px; }
.tool > .big, .tool > .pic { height: 19px; width: 17px; }
.big { width: 17px; height: 17px; }
.pic { position: relative; }
.pic em { position: absolute; right: 0; bottom: 0; font: italic 8px/8px "Liberation Serif", serif; background: #fff; color: #444; }
.off .pic em { color: #aaa; }
.tool.on { background: #ebebeb; border: 1px solid #c4c4c4; padding: 0 2px; height: 39px; margin: -1px 0; }
.g-show .body { gap: 1px; }
.fold { position: absolute; right: 4px; bottom: 2px; }
.notice { height: 17px; margin: 0 4px 0 3px; background: #fdf7c9; display: flex; align-items: center; padding: 0 3px 0 5px; gap: 3px; white-space: nowrap; color: #3a3a2c; }
.notice a { color: inherit; margin-right: 4px; }
.boxed { border: 1px solid #bcbcb4; border-radius: 2px; background: #fffef8; height: 12px; padding: 0 3px; margin-left: 2px; }
.formula { height: 13px; padding: 2px 4px 2px 3px; display: flex; font-size: 5px; line-height: 8px; }
.namebox { width: 34px; background: #fff; display: flex; align-items: center; padding: 0 2px; }
.namebox select, .asel select { flex: 1; appearance: none; }
.fxtools { width: 35px; display: flex; align-items: center; justify-content: space-around; }
.fxtools em { font: italic 700 7px/8px "Liberation Serif", serif; }
.fxline { flex: 1; background: #fff; display: flex; align-items: center; padding-right: 3px; } .fxline input { flex: 1; }

.work { display: flex; background: #efefef; height: 216px; }
.sheetcol { flex: 1; min-width: 0; display: flex; flex-direction: column; }
.sheet { flex: 1; min-height: 0; position: relative; overflow: hidden; background: #fff; }
table { width: 100%; height: 210px; border-collapse: separate; border-spacing: 0; table-layout: fixed; font: 5px/5px "Lato", sans-serif; color: #333; }
tr { height: 7px; }
.w9 { width: 9px; } .w45 { width: 45px; } .w14 { width: 14px; } .w13 { width: 13px; } .w28 { width: 28px; } .w30 { width: 30px; } .w25 { width: 25px; } .w24 { width: 24px; }
th { font-weight: 400; background: #f1f0f0; padding: 0; color: #666; border-right: 1px solid #ddd; text-align: center; }
td { padding: 0 1px; border-right: 1px solid #e6e6e6; border-bottom: 1px solid #e9e9e9; white-space: nowrap; position: relative; }
.num { text-align: right; }
.bold td { font-weight: 700; color: #222; }
td.blue { background: #dae1f1; border-color: #dae1f1; }
.drop { position: absolute; right: 1px; top: 0; width: 6px; height: 6px; background: #fff; border: 1px solid #c4c8d0; }
.drop svg { width: 4px; height: 4px; }
.slicer { position: absolute; left: 227px; top: 68px; width: 60px; height: 101px; background: #fff; border: 1px solid #ebdf98; padding: 2px; display: flex; flex-direction: column; gap: 2px; }
.slicer h2 { font: 700 5px/7px "Open Sans", sans-serif; color: #222; border-bottom: 1px solid #e8d98c; }
.slicer button { height: 9px; background: #fbe294; border: 1px solid #d9bd68; border-radius: 1px; justify-content: flex-start; padding-left: 3px; font-size: 5px; line-height: 7px; }
.slicer .faint { background: #fdf2d2; border-color: #ecdcae; color: #999; }
.charttools { position: absolute; left: 245px; top: 32px; }
.charttools button { width: 15px; height: 14px; border: 1px solid #999; background: #fff; }
.charttools .add { color: #3a9d53; }
.chart { position: absolute; left: 260px; right: 12px; top: 32px; height: 141px; background: #fff; border: 1px solid #8a8a8a; display: flex; flex-direction: column; align-items: flex-start; padding: 2px 0 2px 1px; }
.pv { height: 7px; background: #cfcfcf; border: 1px solid #bdbdbd; padding: 0 1px; font-size: 4px; line-height: 5px; color: #222; gap: 2px; }
.pv.second, .pv.unit { margin-left: 3px; }
.pv.second { margin-top: 3px; }
.plotrow { display: flex; width: 100%; height: 110px; padding-top: 2px; }
.plot { flex: 1; min-width: 0; height: 108px; }
.plot text { font-size: 4px; fill: #555; }
.legend { width: 45px; padding-top: 32px; }
.legend ul { list-style: none; font-size: 4px; line-height: 9px; color: #555; padding: 1px 0 0 2px; }
.legend li { display: flex; align-items: center; gap: 2px; } .legend li i { width: 3px; height: 3px; }
.knob { position: absolute; width: 5px; height: 5px; border: 1px solid #666; border-radius: 50%; background: #fff; margin: -3px; }
.k1, .k4, .k6 { left: 0; } .k2, .k7 { left: 50%; } .k3, .k5, .k8 { left: 100%; }
.k1, .k2, .k3 { top: 0; } .k4, .k5 { top: 50%; } .k6, .k7, .k8 { top: 100%; }
.sheettabs { height: 10px; background: #e8e5e1; display: flex; align-items: center; padding-left: 9px; gap: 5px; font-size: 5px; line-height: 9px; }
.cur { background: #fff; }
.sheettabs .cur { height: 9px; padding: 0 2px; margin-left: 12px; border-bottom: 1px solid #107c41; font-weight: 700; font-family: "Lato", sans-serif; }
.sheettabs .other { font-family: "Lato", sans-serif; margin-right: 12px; }
.hbar { margin-left: auto; width: 39%; display: flex; align-items: center; gap: 3px; padding-right: 1px; }
.hbar i { flex: 1; height: 3px; border-radius: 2px; background: #777; margin-left: 7px; }
.vbar { width: 7px; display: flex; flex-direction: column; align-items: center; font-size: 5px; line-height: 6px; padding-bottom: 8px; }
.vbar i { flex: 1; width: 3px; border-radius: 2px; background: #6a6a6a; margin-bottom: 8px; }
.pane { width: 103px; padding: 4px 5px 0 4px; background: #f0f0f0; }
.ptitle { display: flex; align-items: flex-start; gap: 3px; } .ptitle h2 { font: 400 11px/15px "Noto Sans", sans-serif; flex: 1; color: #444; white-space: nowrap; } .ptitle button + button { margin-left: 4px; }
.choose { display: flex; height: 23px; margin-top: 2px; } .choose p { flex: 1; } .choose button { width: 21px; height: 14px; border: 1px solid #c0c0c0; background: #fafafa; gap: 2px; }
.pfind { height: 14px; border: 1px solid #bbb; background: #fff; display: flex; align-items: center; padding: 0 3px 0 1px; margin-left: -1px; } .pfind input { flex: 1; }
.plist { height: 45px; margin: 7px 0 6px -1px; border: 1px solid #bbb; background: #fff; padding: 1px; font-weight: 700; }
.plist label, .defer label { display: flex; align-items: center; gap: 3px; }
.plist input { width: 5px; height: 5px; background: #1b8a4a; }
hr { border: 0; border-top: 1px solid #ddd; margin: 0 0 2px; }
.drag { padding-right: 15px; }
.areas { display: grid; grid-template-columns: 1fr 1fr; margin-top: 4px; }
.areas label { padding: 2px 3px 3px 1px; height: 29px; border-bottom: 1px solid #d6d6d6; display: block; min-width: 0; }
.areas label:nth-child(odd) { border-right: 1px solid #d0d0d0; }
.areas label:nth-child(even) { padding-right: 0; padding-left: 2px; }
.areas label:nth-child(n+3) { border-bottom-color: transparent; }
.ahead { display: flex; align-items: center; gap: 4px; white-space: nowrap; height: 13px; } .ahead b { font-size: 7px; font-weight: 400; width: 6px; }
.asel { display: flex; align-items: center; border: 1px solid #c4c4c4; background: #fff; height: 10px; padding: 0 2px; line-height: 8px; }
.defer { display: flex; justify-content: space-between; align-items: center; margin-top: 1px; height: 12px; padding-left: 1px; white-space: nowrap; }
.defer input { width: 8px; height: 7px; border: 1px solid #aaa; background: #fff; }
.defer button { width: 25px; height: 12px; border: 1px solid #dcdcdc; color: #bbb; }
.statusbar { height: 13px; background: #f5f4f4; display: flex; align-items: center; padding: 0 4px; white-space: nowrap; }
.statusbar > .i9 { margin: 0 1px 0 7px; }
.view { width: 17px; height: 13px; color: #555; } .view.cur { background: #dedede; }
.statusbar > .i6 { margin-left: 2px; }
.statusbar input { width: 54px; height: 6px; background: linear-gradient(#aaa, #aaa) center / 100% 1px no-repeat; }
.statusbar input::-webkit-slider-thumb { appearance: none; width: 3px; height: 6px; background: #444; }
.pct { margin-left: 3px; }
.taskbar { height: 17px; background: #241f17; display: flex; align-items: center; padding: 0 6px 0 7px; color: #ddd; }
.apps { display: flex; align-items: center; gap: 6px; margin-left: 203px; }
.apps label { width: 74px; height: 11px; border-radius: 6px; background: #f4f4f2; display: flex; align-items: center; gap: 4px; padding-left: 4px; color: #444; margin-left: -1px; margin-right: -1px; }
.apps input { width: 50px; }
.apps .excel { background: #3a372f; }
.tray { margin-left: auto; display: flex; align-items: center; gap: 3px; font-size: 4px; line-height: 5px; text-align: center; }
.tray span { margin: 0 3px; }
.tray time { text-align: right; margin-left: 2px; }
</style>
